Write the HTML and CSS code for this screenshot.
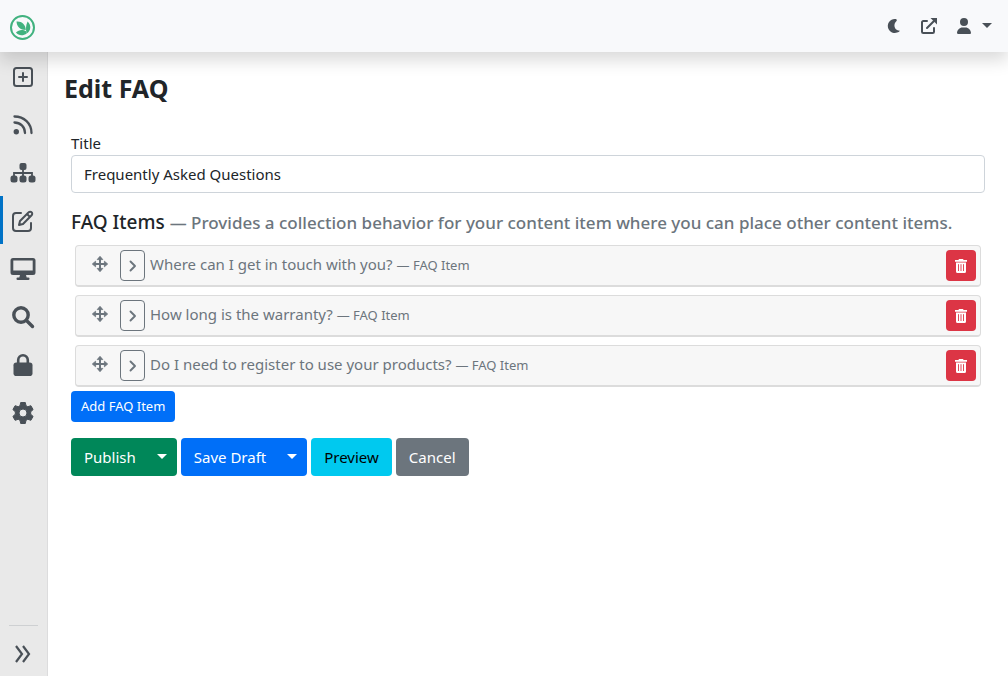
FILE: index.html
```html
<!DOCTYPE html>
<html lang="en">
<head>
<meta charset="utf-8">
<meta name="viewport" content="width=device-width, initial-scale=1">
<title>Edit FAQ</title>
<link rel="stylesheet" href="styles.css">
</head>
<body>
<svg class="sprite" aria-hidden="true">
  <symbol id="move" viewBox="0 0 16 16"><path d="M8 2v12M2 8h12" stroke="currentColor" stroke-width="2"/><path d="M8 .3l2.800 3.300H5.200zM8 15.700l2.800-3.300H5.200zM.3 8l3.300-2.800v5.600zM15.700 8l-3.300-2.800v5.600z" fill="currentColor" stroke="currentColor" stroke-width=".8" stroke-linejoin="round"/></symbol>
  <symbol id="chevron" viewBox="0 0 12 12"><path d="M3.500 1.500L8 6l-4.500 4.500" fill="none" stroke="currentColor" stroke-width="1.900" stroke-linecap="round" stroke-linejoin="round"/></symbol>
  <symbol id="trash" viewBox="0 0 12 14"><path d="M4 0h4l.6 1.1H12v1.600H0V1.100h3.400zM1 3.500h10v9a1.500 1.500 0 0 1-1.500 1.500h-7A1.500 1.500 0 0 1 1 12.500z" fill="currentColor"/><path d="M3.500 5.200v6.800M6 5.200v6.800M8.500 5.200v6.800" stroke="#dc3545" stroke-width=".9"/></symbol>
</svg>
<header class="topbar">
  <a class="brand" href="#" aria-label="Dashboard">
    <svg width="26" height="26" viewBox="0 0 26 26"><circle cx="13.500" cy="13.500" r="11.500" fill="none" stroke="#41b27f" stroke-width="2"/><g fill="#41b27f"><path d="M7.500 7.500c5-.5 9 2.500 9.300 8.500-5.300 0-9.100-3.300-9.300-8.500z"/><path d="M18.600 7.400c4 3.800 3.600 8.900-1 12.200-1-4.400-.8-8.700 1-12.200z"/><path d="M7 18.600c2.500-3 7-3.500 10-1.300l.8 2c-3.600 3-8.200 2.600-10.800-.7z"/></g></svg>
  </a>
  <nav class="tools" aria-label="User tools">
    <button class="tool" type="button" aria-label="Theme"><svg width="14" height="14" viewBox="0 0 14 14"><path d="M8 0A7 7 0 1 0 13 11.700C8.500 12 5.200 6.500 9.300 2.300 10.300 1.200 9.800 0 8 0z" fill="currentColor"/></svg></button>
    <a class="tool" href="#" aria-label="Visit site"><svg width="16" height="16" viewBox="0 0 16 16"><path d="M6 3H2.300A1.300 1.300 0 0 0 1 4.300v9.400A1.300 1.300 0 0 0 2.300 15h9.400a1.300 1.300 0 0 0 1.300-1.300V10M6 10l7-7" fill="none" stroke="currentColor" stroke-width="2" stroke-linecap="round"/><path d="M9.500 0H16v6.500z" fill="currentColor"/></svg></a>
    <button class="tool tool-user" type="button" aria-label="Account"><svg width="14" height="16" viewBox="0 0 448 512"><path fill="currentColor" d="M224 256A128 128 0 1 0 224 0a128 128 0 1 0 0 256zm-45.700 48C79.800 304 0 383.800 0 482.300C0 498.700 13.300 512 29.700 512H418.300c16.400 0 29.700-13.300 29.700-29.700C448 383.800 368.200 304 269.700 304H178.300z"/></svg><span class="caret"></span></button>
  </nav>
</header>
<div class="shell">
  <nav class="sidebar" aria-label="Main">
    <a class="side-item" href="#" aria-label="New"><svg width="22" height="22" viewBox="0 0 22 22" fill="none" stroke="currentColor" stroke-width="2"><rect x="2" y="2" width="18" height="18" rx="2.500"/><path d="M11 7v8M7 11h8" stroke-linecap="round"/></svg></a>
    <a class="side-item" href="#" aria-label="Blog"><svg width="22" height="22" viewBox="0 0 22 22" fill="none" stroke="currentColor" stroke-width="2.300" stroke-linecap="round"><circle cx="4.300" cy="17.700" r="2.700" fill="currentColor" stroke="none"/><path d="M2.500 8.500c5.700 0 10.500 4.300 10.500 10.500M2.500 2.500C12 2.500 19.500 9.500 19.500 19"/></svg></a>
    <a class="side-item" href="#" aria-label="Structure"><svg width="26" height="22" viewBox="0 0 26 22"><path d="M13 6v10M4 16v-5h18v5" fill="none" stroke="currentColor" stroke-width="1.800"/><g fill="currentColor"><rect x="9.500" y="1" width="7" height="7" rx="2"/><rect x=".5" y="13.500" width="7" height="7" rx="2.500"/><rect x="9.500" y="13.500" width="7" height="7" rx="2.500"/><rect x="18.500" y="13.500" width="7" height="7" rx="2.500"/></g></svg></a>
    <a class="side-item is-active" href="#" aria-label="Content" aria-current="page"><svg width="24" height="24" viewBox="0 0 24 24" fill="none" stroke="currentColor" stroke-width="2" stroke-linecap="round" stroke-linejoin="round"><path d="M10 4H5a3 3 0 0 0-3 3v12a3 3 0 0 0 3 3h12a3 3 0 0 0 3-3v-5"/><path d="M9 12l8.700-8.700a2 2 0 0 1 2.900 0 2 2 0 0 1 0 2.900L12 15l-4 1zM16 5l3 3"/></svg></a>
    <a class="side-item" href="#" aria-label="Design"><svg width="26" height="24" viewBox="0 0 26 24"><path fill="currentColor" fill-rule="evenodd" d="M3 1h20a2.500 2.500 0 0 1 2.500 2.500v12A2.500 2.500 0 0 1 23 18h-7l.7 2.500h1.600a1.200 1.200 0 0 1 0 2.500H7.700a1.200 1.200 0 0 1 0-2.500h1.600L10 18H3A2.500 2.500 0 0 1 .5 15.500v-12A2.500 2.500 0 0 1 3 1zm.3 2.500v10h19.400v-10z"/></svg></a>
    <a class="side-item" href="#" aria-label="Search"><svg width="24" height="24" viewBox="0 0 24 24" fill="none" stroke="currentColor" stroke-width="3.400" stroke-linecap="round"><circle cx="10" cy="10" r="7.200"/><path d="M15.500 15.500l6 6"/></svg></a>
    <a class="side-item" href="#" aria-label="Security"><svg width="22" height="24" viewBox="0 0 22 24"><path d="M6.200 11V7a4.800 4.800 0 0 1 9.600 0v4" fill="none" stroke="currentColor" stroke-width="2.600"/><rect x="1.500" y="9.500" width="19" height="13.500" rx="2.800" fill="currentColor"/></svg></a>
    <a class="side-item" href="#" aria-label="Configuration"><svg width="24" height="24" viewBox="0 0 24 24"><path fill="currentColor" fill-rule="evenodd" stroke="currentColor" stroke-width="1" stroke-linejoin="round" d="M9.700 1.500h4.600l.7 3.200 1.800 1 3.100-1 2.200 3.900-2.400 2.200v2.400l2.400 2.200-2.200 3.900-3.100-1-1.800 1-.7 3.200H9.700L9 19.300l-1.800-1-3.100 1-2.200-3.900 2.400-2.200v-2.400L1.900 8.600l2.200-3.900 3.100 1 1.800-1zM12 8a4 4 0 1 0 0 8 4 4 0 1 0 0-8z"/></svg></a>
    <button class="side-toggle" type="button" aria-label="Expand menu"><svg width="16" height="18" viewBox="0 0 16 18" fill="none" stroke="currentColor" stroke-width="2.200"><path d="M1 1l6 8-6 8M8 1l6 8-6 8"/></svg></button>
  </nav>
  <main class="main">
    <h1 class="page-title">Edit FAQ</h1>
    <form class="editor">
      <label class="label" for="title">Title</label>
      <input class="text-input" id="title" type="text" value="Frequently Asked Questions">
      <h2 class="section-title">FAQ Items <span class="hint">— Provides a collection behavior for your content item where you can place other content items.</span></h2>
      <ul class="items">
        <li class="item"><svg class="move" width="16" height="16"><use href="#move"/></svg><button class="expand" type="button" aria-label="Expand"><svg width="12" height="12"><use href="#chevron"/></svg></button><span class="item-name">Where can I get in touch with you? <span class="item-type">— FAQ Item</span></span><button class="delete" type="button" aria-label="Delete"><svg width="12" height="14"><use href="#trash"/></svg></button></li>
        <li class="item"><svg class="move" width="16" height="16"><use href="#move"/></svg><button class="expand" type="button" aria-label="Expand"><svg width="12" height="12"><use href="#chevron"/></svg></button><span class="item-name">How long is the warranty? <span class="item-type">— FAQ Item</span></span><button class="delete" type="button" aria-label="Delete"><svg width="12" height="14"><use href="#trash"/></svg></button></li>
        <li class="item"><svg class="move" width="16" height="16"><use href="#move"/></svg><button class="expand" type="button" aria-label="Expand"><svg width="12" height="12"><use href="#chevron"/></svg></button><span class="item-name">Do I need to register to use your products? <span class="item-type">— FAQ Item</span></span><button class="delete" type="button" aria-label="Delete"><svg width="12" height="14"><use href="#trash"/></svg></button></li>
      </ul>
      <button class="btn btn-small btn-blue" type="button">Add FAQ Item</button>
      <div class="actions">
        <div class="split"><button class="btn btn-green" type="submit">Publish</button><button class="btn btn-green btn-caret" type="button" aria-label="Publish options"><span class="caret"></span></button></div>
        <div class="split"><button class="btn btn-blue" type="button">Save Draft</button><button class="btn btn-blue btn-caret" type="button" aria-label="Draft options"><span class="caret"></span></button></div>
        <button class="btn btn-cyan" type="button">Preview</button>
        <a class="btn btn-grey" href="#">Cancel</a>
      </div>
    </form>
  </main>
</div>
</body>
</html>
```
FILE: styles.css
```css
* { box-sizing: border-box; }
body {
  margin: 0;
  min-height: 100vh;
  display: flex;
  flex-direction: column;
  background: #fff;
  color: #212529;
  font-family: "Noto Sans", "Open Sans", sans-serif;
  font-size: 15px;
  line-height: 24px;
}
button, input { font: inherit; }
button { cursor: pointer; }
svg { display: block; flex: none; }
.sprite { position: absolute; width: 0; height: 0; }

.topbar {
  position: relative;
  z-index: 1;
  display: flex;
  align-items: center;
  justify-content: space-between;
  height: 52px;
  padding: 0 16px 0 9px;
  background: #f8f9fb;
  box-shadow: 0 8px 16px rgba(0, 0, 0, .15);
}
.brand { padding-top: 2px; }
.tools { display: flex; align-items: center; gap: 20px; }
.tool { display: flex; align-items: center; padding: 0; border: 0; background: none; color: #495057; }
.tool-user { gap: 11px; }
.caret { margin-bottom: 2px; border: 5px solid transparent; border-top-color: currentColor; border-bottom: 0; }

.shell { flex: 1; display: flex; }
.sidebar {
  display: flex;
  flex-direction: column;
  width: 48px;
  flex: none;
  background: #e9e9e9;
  border-right: 1px solid #dcdcdd;
}
.side-item {
  display: flex;
  align-items: center;
  justify-content: center;
  height: 48px;
  padding: 2px 2px 0 0;
  color: #495057;
}
.side-item.is-active { padding-right: 5px; border-left: 3px solid #0072c6; }
.side-toggle {
  display: flex;
  align-items: center;
  justify-content: center;
  height: 51px;
  margin: auto 9px 0;
  padding: 6px 2px 0 0;
  border: 0;
  border-top: 1px solid #ced0d2;
  background: none;
  color: #495057;
}

.main { flex: 1; min-width: 0; padding: 20px 16px; }
.page-title { margin: 0 0 28px; font-size: 25px; line-height: 32px; font-weight: 700; }
.editor { padding: 0 7px; }
.label { display: block; padding-bottom: 1px; line-height: 22px; }
.text-input {
  display: block;
  width: 100%;
  height: 38px;
  margin-bottom: 17px;
  padding: 6px 12px;
  border: 1px solid #ced4da;
  border-radius: 4px;
  background: #fff;
  color: #212529;
}
.section-title { margin: 0 0 10px; font-size: 19px; line-height: 24px; font-weight: 500; }
.hint { font-size: 17px; color: #6c757d; }
.items { display: grid; gap: 8px; margin: 0 4px 4px; padding: 0; list-style: none; }
.item {
  display: flex;
  align-items: center;
  height: 42px;
  padding: 0 4px 0 16px;
  border: 1px solid #dcdcdc;
  border-bottom-width: 2px;
  border-radius: 4px;
  background: #f7f7f7;
  color: #6c757d;
}
.move { margin-bottom: 3px; }
.expand {
  display: flex;
  align-items: center;
  justify-content: center;
  width: 25px;
  height: 31px;
  margin: 0 5px 0 12px;
  padding: 0;
  border: 1px solid #6c757d;
  border-radius: 4px;
  background: transparent;
  color: #6c757d;
}
.item-name { flex: 1; padding-bottom: 2px; }
.item-type { font-size: 13px; }
.delete {
  display: flex;
  align-items: center;
  justify-content: center;
  width: 30px;
  height: 31px;
  padding: 0;
  border: 0;
  border-radius: 4px;
  background: #dc3545;
  color: #fff;
}
.btn {
  display: block;
  padding: 7px 13px;
  border: 0;
  border-radius: 4px;
  color: #fff;
  text-decoration: none;
}
.btn-small { padding: 5px 10px; font-size: 13px; line-height: 21px; }
.btn-blue { background: #006ff8; }
.btn-green { background: #008759; }
.btn-cyan { background: #00c9ef; color: #000; }
.btn-grey { background: #6c757d; }
.actions { display: flex; gap: 4px; margin-top: 16px; }
.split { display: flex; }
.split .btn:first-child { border-radius: 4px 0 0 4px; }
.btn-caret { padding: 7px 10px 7px 8px; border-radius: 0 4px 4px 0; }
.btn-caret .caret { display: block; }
```
